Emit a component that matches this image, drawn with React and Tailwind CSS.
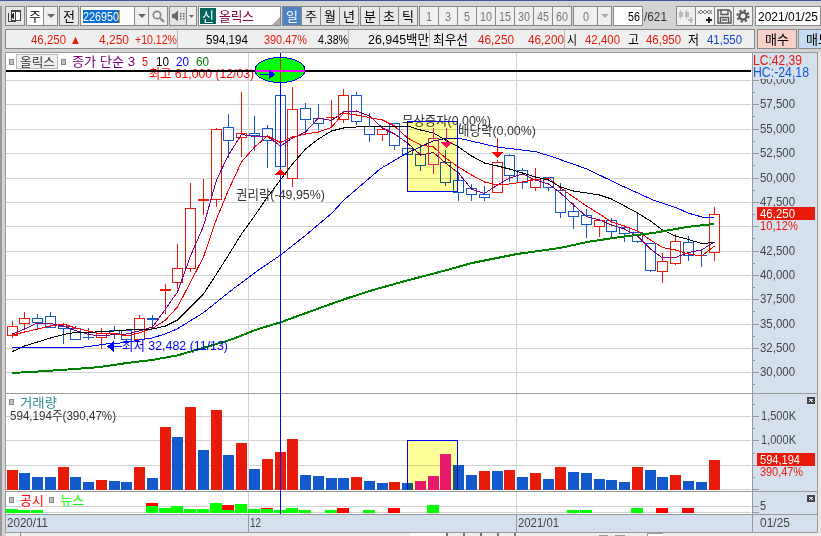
import clsx from 'clsx';

const RED = '#e81a0a';
const BLUE = '#1459cc';
const PINK = '#f0146e';

// [type, body top, body bottom, high, low]
const candles = [
    ['r', 326, 335, 321, 337], ['r', 318, 323, 312, 328], ['b', 318, 322, 314, 328], ['b', 316, 327, 312, 327],
    ['b', 326, 328, 324, 343], ['b', 328, 339, 326, 339], ['b', 337, 337, 328, 339], ['r', 333, 337, 328, 348],
    ['b', 330, 333, 326, 338], ['b', 330, 339, 330, 339], ['r', 318, 339, 315, 339], ['b', 318, 319, 315, 328],
    ['r', 289, 290, 284, 313], ['r', 268, 282, 244, 288], ['r', 208, 268, 183, 271], ['r', 199, 200, 179, 214],
    ['r', 129, 199, 128, 206], ['b', 127, 140, 114, 157], ['r', 133, 137, 92, 156], ['b', 133, 135, 116, 150],
    ['b', 128, 140, 125, 167], ['b', 95, 166, 95, 166], ['r', 109, 178, 87, 186], ['b', 108, 119, 103, 132],
    ['b', 118, 123, 104, 129], ['r', 117, 117, 100, 127], ['r', 95, 119, 89, 122], ['b', 95, 121, 92, 124],
    ['b', 126, 134, 113, 141], ['r', 129, 134, 126, 140], ['b', 123, 145, 123, 149], ['b', 148, 154, 148, 154],
    ['b', 154, 165, 145, 170], ['p', 138, 164, 128, 173], ['b', 162, 182, 150, 185], ['b', 180, 192, 175, 200],
    ['b', 188, 194, 184, 200], ['b', 194, 197, 186, 200], ['r', 162, 192, 160, 192], ['b', 155, 175, 154, 181],
    ['b', 170, 182, 168, 188], ['r', 179, 187, 168, 190], ['b', 177, 187, 177, 190], ['b', 190, 212, 183, 217],
    ['b', 211, 216, 203, 228], ['b', 215, 224, 209, 237], ['r', 220, 226, 220, 236], ['b', 220, 231, 218, 238],
    ['b', 227, 233, 227, 241], ['b', 232, 241, 212, 242], ['b', 243, 270, 243, 271], ['r', 261, 271, 253, 282],
    ['r', 241, 263, 234, 264], ['b', 242, 255, 236, 260], ['b', 255, 255, 250, 266], ['r', 214, 252, 207, 260],
];

const volumes = [
    ['r', 470], ['b', 473], ['b', 477], ['b', 477], ['r', 467], ['b', 477], ['b', 482], ['r', 480], ['b', 481], ['b', 482],
    ['r', 467], ['b', 478], ['r', 427], ['b', 437], ['r', 407], ['b', 450], ['r', 410], ['b', 455], ['r', 443], ['b', 469],
    ['r', 459], ['r', 452], ['r', 439], ['b', 475], ['b', 476], ['b', 478], ['b', 478], ['r', 477], ['b', 481], ['b', 483],
    ['r', 482], ['b', 483], ['p', 481], ['p', 476], ['p', 454], ['b', 465], ['b', 475], ['r', 471], ['b', 471], ['r', 470],
    ['b', 477], ['r', 473], ['b', 479], ['r', 467], ['b', 472], ['b', 473], ['b', 479], ['b', 480], ['b', 482], ['r', 467],
    ['b', 470], ['b', 477], ['r', 475], ['b', 481], ['b', 482], ['r', 460],
];

// [index, red top, green top]
const notices = [
    [0, null, 509], [1, null, 510], [2, null, 510], [11, 503, 506], [12, null, 508], [13, null, 506], [14, null, 509],
    [15, null, 509], [16, null, 503], [17, 505, 510], [18, null, 504], [19, null, 509], [20, 508, 509], [21, null, 510],
    [22, null, 508], [23, null, 510], [25, null, 510], [26, 508, 513], [28, null, 510], [30, 508, 513], [33, null, 505],
    [44, null, 510], [45, null, 510], [49, null, 508], [51, 508, 513], [53, 508, 513],
];

const ma3 = [334, 329, 323, 323.5, 326, 330.5, 334.5, 336, 334.5, 334, 331, 327, 309, 292, 256, 226, 180, 155, 134.5, 136.5, 136.5, 146, 138, 132, 118, 120.5, 112, 111, 116, 128, 134, 143, 155, 152.5, 163, 173, 189, 193.5, 185, 178, 174, 180, 184, 193, 205, 216.5, 220, 225, 229, 236, 249, 258, 257.5, 252.5, 250, 242];
const ma5 = [335, 332, 329, 326, 324, 328, 331, 334, 333.5, 336, 333, 328.5, 320, 307, 282, 257, 219, 190, 162, 147, 136, 142.5, 137, 134, 132, 127.5, 113, 115, 117.5, 120, 126, 138, 145, 147, 158, 167, 175, 182, 185, 184, 182, 179.5, 178, 188, 197, 206, 214, 222, 226, 231, 240, 247.5, 250, 254, 256, 246];
const ma10 = [351.5, 346, 342, 338, 334.5, 332.5, 332.5, 331.5, 331, 330, 329.5, 329, 326, 320, 307, 294, 274, 255, 234, 216, 197, 180, 164, 149, 139, 131, 128, 127, 126, 126, 126, 126, 130, 133, 140, 147, 156, 163, 166, 169, 173, 177, 180, 187, 191, 193, 195, 199, 206, 213, 221, 230, 236, 239.5, 243.5, 242.5];
const ma20 = '12,348 24,347.5 80,347.5 92,346 106,344 127,342.5 139,340 152,338 165,334 177,329 203,313 233,289 250,276.5 260,269 280,255.5 306,235 332,213 344,200 358,188 380,169 407,153 433,141 446,138.5 458,138 497,147 522,150 537,152 553,157 587,169 620,185 653,200 677,208 688,213 702,217 714,217';
const ma60 = '12,373 38,371.5 75,369 100,367 127,363 152,360 177,355.5 203,348 230,340 258,329 280,322.5 306,313 345,299 373,290 407,280.5 447,270 472,263 497,258 517,254 560,248 587,242 620,237 653,233 687,227 714,224';

const gridY = [80, 104, 129, 153, 178, 202, 226, 251, 275, 299, 324, 348, 372];
const prices = ['60,000', '57,500', '55,000', '52,500', '50,000', '47,500', '', '42,500', '40,000', '37,500', '35,000', '32,500', '30,000'];

const center = (i) => Math.floor(12 + i * 12.764);
const tone = (t) => (t === 'r' ? RED : t === 'b' ? BLUE : PINK);
const toPoints = (values) => values.map((y, i) => `${center(i) + 0.5},${y}`).join(' ');

const Txt = ({ x, y, w, fill = '#444', size = 13, children }) => (
    <text x={x} y={y} textLength={w} lengthAdjust="spacingAndGlyphs" fill={fill} fontSize={size}>{children}</text>
);

// one line of condensed text with a fixed width
const Fit = ({ w, className = '', size = 13, children }) => (
    <svg width={w} height="14" className={clsx('shrink-0 overflow-visible fill-current', className)}>
        <text x="0" y="12" textLength={w} lengthAdjust="spacingAndGlyphs" fontSize={size}>{children}</text>
    </svg>
);

const Candle = ({ data, i }) => {
    const [type, top, bottom, high, low] = data;
    const x = center(i);
    const color = tone(type);
    const flat = bottom - top <= 1;
    return (
        <g fill={color}>
            {flat ? (
                <>
                    <rect x={x} y={high} width="1" height={low - high + 1} />
                    <rect x={x - 5} y={top} width="11" height={bottom - top + 1} />
                </>
            ) : (
                <>
                    <rect x={x} y={high} width="1" height={top - high} />
                    <rect x={x} y={bottom} width="1" height={low - bottom + 1} />
                    <rect x={x - 4.5} y={top + 0.5} width="10" height={bottom - top} fill="none" stroke={color} />
                </>
            )}
        </g>
    );
};

const AxisBack = ({ y, h }) => (
    <>
        <rect x="752" y={y} width="66" height={h} fill="#d5e0ef" />
        <rect x="752" y={y} width="1" height={h} fill="#999" />
        <rect x="817" y={y} width="1" height={h} fill="#999" />
        <rect x="5" y={y} width="1" height={h} fill="#999" />
    </>
);

const CloseMark = ({ y }) => (
    <g>
        <rect x="807" y={y} width="8" height="7" fill="#444" />
        <path d={`M809 ${y + 2}l4 3M813 ${y + 2}l-4 3`} stroke="#dde" />
    </g>
);

const PriceChart = () => (
    <svg width="813" height="341" viewBox="5 52 813 341" className="block" shapeRendering="crispEdges">
        <rect x="5" y="52" width="813" height="341" fill="#fff" />
        {gridY.map((y) => <rect key={y} x="6" y={y} width="745" height="1" fill="#d3d3d3" />)}
        <rect x="248" y="53" width="1" height="340" fill="#d3d3d3" />
        <rect x="516" y="53" width="1" height="340" fill="#d3d3d3" />
        <AxisBack y={52} h={341} />
        <rect x="5" y="52" width="813" height="1" fill="#999" />

        {candles.map((c, i) => i !== 33 && <Candle key={i} data={c} i={i} />)}
        <g fill="none">
            <polyline points={toPoints(ma3)} stroke="#800080" />
            <polyline points={toPoints(ma5)} stroke="#f00" />
            <polyline points={toPoints(ma10)} stroke="#000" />
            <polyline points={ma20} stroke="#00f" />
            <polyline points={ma60} stroke="#008000" strokeWidth="2" />
        </g>

        <Txt x={149} y={78} w={105} fill="#f00">최고 61,000 (12/03)</Txt>
        <ellipse cx="280" cy="70" rx="25" ry="12.5" fill="#0f0" stroke="#00f" />
        <rect x="6" y="70" width="745" height="2" fill="#000" />
        <rect x="255" y="70" width="50" height="2" fill="#f0f" />
        <path d="M260 74.5h12" stroke="#00f" />
        <path d="M269 69.5L275 74.5L269 79.5Z" fill="#00f" />
        <rect x="280" y="53" width="1" height="340" fill="#00f" />
        <rect x="280" y="58" width="1" height="24" fill="#e02020" />

        <path d="M107 346.5L114 341V352Z" fill="#00f" />
        <path d="M114 346.5h8" stroke="#00f" />
        <Txt x={122} y={350} w={106} fill="#00f">최저 32,482 (11/13)</Txt>

        <path d="M280.5 169L286.5 175H274.5Z" fill="#f00" />
        <Txt x={236} y={199} w={89} fill="#333">권리락(-49,95%)</Txt>
        <Txt x={402} y={125} w={89} fill="#333">무상증자(0,00%)</Txt>
        <Txt x={458} y={135} w={78} fill="#333">배당락(0,00%)</Txt>

        <rect x="407.5" y="121.5" width="50" height="70" fill="#ffff99" stroke="#00f" style={{ mixBlendMode: 'multiply' }} />
        <Candle data={candles[33]} i={33} />
        <rect x="446" y="128" width="1" height="15" fill={PINK} />
        <path d="M440.5 142H452.5L446.5 148Z" fill="#ff0066" />
        <rect x="497" y="138" width="1" height="15" fill="#f00" />
        <path d="M491.5 152H503.5L497.5 158Z" fill="#f00" />

        {gridY.map((y, i) => (
            <g key={y}>
                <rect x="753" y={y} width="6" height="1" fill="#999" />
                <rect x="753" y={y + 12} width="2" height="1" fill="#999" />
                {prices[i] && <Txt x={760} y={y + 4} w={35}>{prices[i]}</Txt>}
            </g>
        ))}
        <rect x="753" y="53" width="64" height="26" fill="#d5e0ef" />
        <Txt x={753} y={65} w={49} fill={RED} size={14}>LC:42,39</Txt>
        <Txt x={753} y={77} w={56} fill={BLUE} size={14}>HC:-24,18</Txt>
        <rect x="757" y="207" width="58" height="13" fill={RED} />
        <Txt x={760} y={218} w={35} fill="#fff">46,250</Txt>
        <Txt x={760} y={230} w={38} fill={RED}>10,12%</Txt>
    </svg>
);

const VolumeChart = () => (
    <svg width="813" height="98" viewBox="5 393 813 98" className="block" shapeRendering="crispEdges">
        <rect x="5" y="393" width="813" height="98" fill="#fff" />
        {[416, 440, 465, 489].map((y) => <rect key={y} x="6" y={y} width="745" height="1" fill="#d3d3d3" />)}
        <rect x="248" y="393" width="1" height="98" fill="#d3d3d3" />
        <rect x="516" y="393" width="1" height="98" fill="#d3d3d3" />
        <AxisBack y={393} h={98} />
        <rect x="5" y="393" width="813" height="1" fill="#999" />
        {volumes.map(([t, y], i) => t !== 'p' && <rect key={i} x={center(i) - 5} y={y} width="11" height={490 - y} fill={tone(t)} />)}
        <rect x="407" y="440" width="51" height="50" fill="#ffff99" style={{ mixBlendMode: 'multiply' }} />
        {volumes.map(([t, y], i) => t === 'p' && <rect key={i} x={center(i) - 5} y={y} width="11" height={490 - y} fill="#e8196c" />)}
        <path d="M407.5 490V440.5H457.5V490" fill="none" stroke="#00f" />
        <rect x="280" y="393" width="1" height="98" fill="#00f" />
        <rect x="9.5" y="399.5" width="4" height="5" fill="#c0c0c0" stroke="#888" />
        <Txt x={20} y={407} w={37} fill="#2e8b8b">거래량</Txt>
        <Txt x={10} y={420} w={106} fill="#333">594,194주(390,47%)</Txt>
        {[416, 440, 465, 489].map((y) => <rect key={y} x="753" y={y} width="6" height="1" fill="#999" />)}
        {[404, 428, 453, 477].map((y) => <rect key={y} x="753" y={y} width="2" height="1" fill="#999" />)}
        <Txt x={761} y={420} w={35}>1,500K</Txt>
        <Txt x={761} y={444} w={35}>1,000K</Txt>
        <rect x="757" y="453" width="58" height="13" fill={RED} />
        <Txt x={760} y={464} w={40} fill="#fff">594,194</Txt>
        <Txt x={760} y={476} w={43} fill={RED}>390,47%</Txt>
        <CloseMark y={397} />
    </svg>
);

const NoticeChart = () => (
    <svg width="813" height="23" viewBox="5 491 813 23" className="block" shapeRendering="crispEdges">
        <rect x="5" y="491" width="813" height="23" fill="#fff" />
        <rect x="6" y="506" width="745" height="1" fill="#d3d3d3" />
        <rect x="6" y="512" width="745" height="1" fill="#d3d3d3" />
        <rect x="248" y="491" width="1" height="23" fill="#d3d3d3" />
        <rect x="516" y="491" width="1" height="23" fill="#d3d3d3" />
        <AxisBack y={491} h={23} />
        <rect x="5" y="491" width="813" height="1" fill="#999" />
        {notices.map(([i, red, green]) => (
            <g key={i}>
                {red && <rect x={center(i) - 6} y={red} width="12" height={green - red} fill="#f00" />}
                <rect x={center(i) - 6} y={green} width="12" height={513 - green} fill="#0f0" />
            </g>
        ))}
        <rect x="280" y="491" width="1" height="23" fill="#00f" />
        <rect x="9.5" y="497.5" width="4" height="5" fill="#c0c0c0" stroke="#888" />
        <Txt x={20} y={505} w={24} fill="#f00">공시</Txt>
        <rect x="49.5" y="497.5" width="4" height="5" fill="#c0c0c0" stroke="#888" />
        <Txt x={60} y={505} w={24} fill="#0f0">뉴스</Txt>
        <rect x="753" y="506" width="6" height="1" fill="#999" />
        <rect x="753" y="512" width="6" height="1" fill="#999" />
        <Txt x={760} y={510} w={6}>5</Txt>
        <CloseMark y={495} />
    </svg>
);

const Cell = ({ className, children }) => (
    <div className={clsx('h-[20px] shrink-0 border border-[#888] flex items-center justify-center', className)}>
        {children}
    </div>
);

const Arrow = ({ className = 'text-[#666]' }) => (
    <svg width="8" height="4" viewBox="0 0 8 4" className={className}><path d="M0 0H8L4 4Z" fill="currentColor" /></svg>
);

const Toolbar = () => (
    <div className="flex items-center h-[20px] mt-[5px] ml-[5px] text-[13px] leading-none text-black">
        <Cell className="w-[20px] bg-[#e4e4e4]">
            <svg width="14" height="14" viewBox="0 0 14 14" fill="none" shapeRendering="crispEdges">
                <rect x="3.5" y="1.5" width="9" height="10" fill="#fff" stroke="#444" />
                <path d="M3 2h10" stroke="#444" strokeWidth="2" />
                <path d="M7.5 3V11M0.5 4V12.5H8" stroke="#444" />
                <path d="M5.500 4V10L2 7Z" fill="#222" />
            </svg>
        </Cell>
        <Cell className="ml-px w-[18px] bg-white">주</Cell>
        <Cell className="-ml-px w-[15px] bg-[#efefef]"><Arrow /></Cell>
        <Cell className="ml-px w-[20px] bg-[#e8e8e8]">전</Cell>
        <Cell className="ml-px w-[55px] bg-white !justify-start pl-[2px]">
            <span className="flex h-[13px] items-center bg-[#0a6fd0] text-white border-r border-orange-400"><Fit w={36}>226950</Fit></span>
        </Cell>
        <Cell className="-ml-px w-[15px] bg-[#efefef]"><Arrow /></Cell>
        <Cell className="-ml-px w-[20px] bg-[#efefef]">
            <svg width="13" height="13" viewBox="0 0 13 13" fill="none" stroke="#888" strokeWidth="1.7">
                <circle cx="5" cy="5" r="3.7" /><path d="M8 8l4 4" strokeWidth="2.4" />
            </svg>
        </Cell>
        <Cell className="ml-px w-[18px] bg-[#e4e4e4]">
            <svg width="14" height="12" viewBox="0 0 14 12" fill="#666">
                <path d="M1 4h2l4-3.500v11L3 8H1Z" /><path d="M9 3h1.500v1.500H9ZM9 5.500h1.500V7H9ZM9 8h1.500v1.500H9ZM12 3h1.500v1.500H12ZM12 5.500h1.500V7H12ZM12 8h1.500v1.500H12Z" />
            </svg>
        </Cell>
        <Cell className="-ml-px w-[11px] bg-[#efefef]"><svg width="5" height="3"><path d="M0 0H5L2.500 3Z" fill="#666" /></svg></Cell>
        <Cell className="ml-px w-[83px] bg-white !justify-start">
            <span className="flex h-[16px] w-[16px] shrink-0 ml-px items-center justify-center bg-[#076560] text-white">신</span>
            <Fit w={35} className="ml-[3px] text-[#800040]">올릭스</Fit>
            <svg width="8" height="8" className="self-end ml-auto shrink-0"><path d="M8 0V8H0Z" fill="#aaa" /></svg>
        </Cell>
        <div className="flex ml-px">
            {['일', '주', '월', '년'].map((t, i) => (
                <Cell key={t} className={clsx('w-[20px]', i === 0 ? 'bg-[#4b83c6] text-white' : '-ml-px bg-[#e8e8e8]')}>{t}</Cell>
            ))}
        </div>
        <div className="flex ml-px">
            {['분', '초', '틱'].map((t, i) => (
                <Cell key={t} className={clsx('w-[20px] bg-[#e8e8e8]', i > 0 && '-ml-px')}>{t}</Cell>
            ))}
        </div>
        <div className="flex ml-px text-[#777]">
            {[1, 3, 5, 10, 15, 30, 45, 60].map((n, i) => (
                <Cell key={n} className={clsx('w-[20px] bg-[#efefef]', i > 0 && '-ml-px')}><Fit w={n > 9 ? 12 : 6}>{n}</Fit></Cell>
            ))}
        </div>
        <Cell className="ml-px w-[25px] bg-[#efefef] text-[#777]"><Fit w={6}>0</Fit></Cell>
        <Cell className="-ml-px w-[15px] bg-[#efefef]"><Arrow className="text-[#aaa]" /></Cell>
        <Cell className="ml-px w-[30px] bg-white !justify-end pr-[2px]"><Fit w={12}>56</Fit></Cell>
        <div className="w-[35px] pl-px text-[#333]"><Fit w={23}>/621</Fit></div>
        <Cell className="w-[20px] bg-[#efefef]">
            <svg width="16" height="16" viewBox="0 0 16 16" fill="#bbb" shapeRendering="crispEdges">
                <path d="M1 4h4v5H1ZM2 2h1v9h-1ZM7 4h4v5H7ZM8 2h1v9h-1ZM10 11h5v2h-5ZM12 9h2v6H12Z" />
            </svg>
        </Cell>
        <Cell className="-ml-px w-[20px] bg-[#f4f4f4]">
            <svg width="16" height="16" viewBox="0 0 16 16" fill="none" stroke="#777">
                <path d="M1 3L4 6L8 2L12 6L15 2M1 6L4 2L8 6L12 2L15 6" /><path d="M9 12h6M12 9v6" stroke="#222" strokeWidth="2" />
            </svg>
        </Cell>
        <Cell className="-ml-px w-[20px] bg-[#efefef]">
            <svg width="15" height="15" viewBox="0 0 15 15" fill="none" stroke="#555" strokeWidth="1.400">
                <path d="M1 1H12L14 3V14H1ZM4 1V5.500H11V1M3.500 14V8.500H11.500V14M5 11H10" />
            </svg>
        </Cell>
        <Cell className="-ml-px w-[20px] bg-[#efefef]">
            <svg width="14" height="14" viewBox="0 0 14 14" fill="none" stroke="#555">
                <circle cx="7" cy="7" r="3.600" strokeWidth="2.200" />
                <circle cx="7" cy="7" r="5.600" strokeWidth="2" strokeDasharray="2.200 2.200" />
            </svg>
        </Cell>
        <Cell className="ml-[2px] w-[66px] bg-white !justify-start pl-[2px]"><Fit w={60}>2021/01/25</Fit></Cell>
    </div>
);

// [text, left gap, width, colour]
const quotes = [
    ['46,250', 24, 36, 'r'], ['▲', 3, 12, 'r'], ['4,250', 17, 31, 'r'], ['+10.12%', 5, 43, 'r'], null,
    ['594,194', 27, 43, 'k'], ['390.47%', 15, 44, 'r'], ['4.38%', 10, 31, 'k'], null,
    ['26,945백만', 18, 62, 'k'], null,
    ['최우선', 2, 36, 'k'], ['46,250', 9, 37, 'r'], ['46,200', 13, 37, 'r'], null,
    ['시', 1, 11, 'k'], ['42,400', 7, 36, 'r'], ['고', 7, 12, 'k'], ['46,950', 6, 36, 'r'], ['저', 6, 12, 'k'], ['41,550', 7, 36, 'b'],
];

const quoteTone = { r: 'text-[#e81a0a]', b: 'text-[#1446c8]', k: 'text-black' };

const QuoteBar = () => (
    <div className="flex mt-[3px] ml-[5px] h-[20px] text-[13px]">
        <div className="flex w-[750px] shrink-0 items-center border border-[#888] bg-[#efefef]">
            {quotes.map((q, i) => q ? (
                <div key={i} className="shrink-0 flex justify-end" style={{ width: q[1] + q[2] }}>
                    <Fit w={q[2] - 1} className={quoteTone[q[3]]}>{q[0]}</Fit>
                </div>
            ) : <div key={i} className="w-px h-full shrink-0 bg-[#bbb]" />)}
        </div>
        <div className="ml-[2px] w-[40px] shrink-0 border border-[#888] bg-[#f6d0c9] flex items-center justify-center leading-none">매수</div>
        <div className="ml-px w-[40px] shrink-0 border border-[#888] bg-[#c5dcf2] flex items-center pl-[7px] leading-none whitespace-nowrap">매도</div>
    </div>
);

const Legend = () => (
    <div className="absolute left-[4px] top-[2px] flex items-center h-[15px] text-[13px] leading-none whitespace-nowrap">
        <span className="h-[6px] w-[5px] border border-[#888] bg-[#c0c0c0]" />
        <span className="ml-[2px] flex h-[15px] w-[42px] items-center justify-center border border-[#bbb] bg-[#efefef] text-[#333]"><Fit w={35} size={12}>올릭스</Fit></span>
        <span className="ml-[3px] h-[6px] w-[5px] border border-[#888] bg-[#c0c0c0]" />
        <svg width="145" height="15" className="ml-[6px]">
            <Txt x={0} y={12} w={63} fill="#800080">종가 단순 3</Txt>
            <Txt x={70} y={12} w={6} fill="#f00">5</Txt>
            <Txt x={84} y={12} w={13} fill="#000">10</Txt>
            <Txt x={104} y={12} w={13} fill="#00f">20</Txt>
            <Txt x={124} y={12} w={13} fill="#008000">60</Txt>
        </svg>
    </div>
);

const DateAxis = () => (
    <div className="flex h-[19px] w-[813px] border border-[#999] bg-[#d5e0ef] text-[#444]">
        <div className="w-[243px] border-r border-[#999] pl-px"><Fit w={41}>2020/11</Fit></div>
        <div className="w-[268px] border-r border-[#999] pl-px"><Fit w={11}>12</Fit></div>
        <div className="w-[236px] border-r border-[#999] pl-px"><Fit w={41}>2021/01</Fit></div>
        <div className="pl-[7px]"><Fit w={30}>01/25</Fit></div>
    </div>
);

const App = () => (
    <div className="h-[536px] w-[821px] overflow-hidden bg-[#d3d3d3] border-t-[1px] border-[#3c5aa0] font-['Liberation_Sans','Noto_Sans_CJK_KR',sans-serif]">
        <div className="h-[535px] border-l-2 border-[#999]">
            <div className="-ml-[2px]">
                <Toolbar />
                <QuoteBar />
                <div className="mt-[3px] ml-[5px] bg-[#e6e6e6]">
                    <div className="relative w-[813px]">
                        <PriceChart />
                        <VolumeChart />
                        <NoticeChart />
                        <DateAxis />
                        <Legend />
                    </div>
                </div>
                <div className="flex h-[3px] ml-[6px] bg-[#efefef]">
                    <div className="w-[15px] border-r border-[#888]" />
                    <div className="ml-[389px] w-[38px] border-r-2 border-[#777] bg-white" />
                    <div className="w-[17px] border-r-2 border-[#777]" />
                    <div className="w-[17px] border-r-2 border-[#777]" />
                    <div className="w-[17px] border-r-2 border-[#777]" />
                    <div className="w-[17px] border-r-2 border-[#777]" />
                    <div className="ml-[83px] mt-[2px] w-[9px] bg-[#999]" />
                    <div className="ml-[7px] mt-[2px] w-[10px] bg-[#999]" />
                    <div className="ml-[22px] w-[16px] border-t border-l border-[#999] bg-white" />
                </div>
            </div>
        </div>
    </div>
);

export default App;
